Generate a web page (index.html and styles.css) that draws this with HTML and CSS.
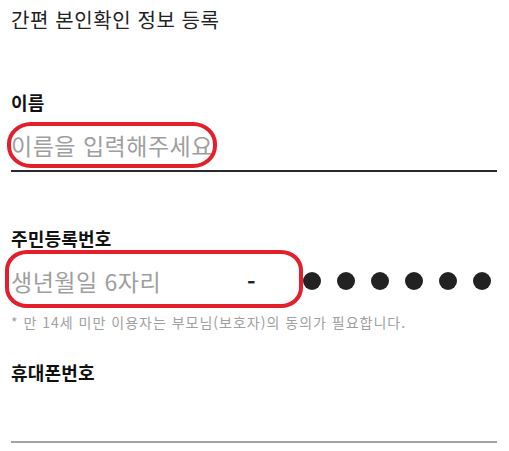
FILE: index.html
```html
<!DOCTYPE html>
<html lang="ko">
<head>
<meta charset="utf-8">
<title>간편 본인확인 정보 등록</title>
<link rel="stylesheet" href="styles.css">
</head>
<body>
<main class="page">
  <h1 class="title">간편 본인확인 정보 등록</h1>

  <section class="field field-name">
    <div class="label">이름</div>
    <div class="row row-underline">
      <span class="placeholder">이름을 입력해주세요</span>
      <span class="mark mark-name"></span>
    </div>
  </section>

  <section class="field field-rrn">
    <div class="label">주민등록번호</div>
    <div class="row">
      <span class="placeholder birth">생년월일 6자리</span>
      <span class="dash">-</span>
      <span class="dots">
        <i class="dot"></i><i class="dot"></i><i class="dot"></i><i class="dot"></i><i class="dot"></i><i class="dot"></i>
      </span>
      <span class="mark mark-rrn"></span>
    </div>
    <p class="note">* 만 14세 미만 이용자는 부모님(보호자)의 동의가 필요합니다.</p>
  </section>

  <section class="field field-phone">
    <div class="label">휴대폰번호</div>
    <div class="row row-underline row-gray"></div>
  </section>
</main>
</body>
</html>
```

FILE: styles.css
```css
html, body {
  margin: 0;
  padding: 0;
  background: #ffffff;
}

body {
  font-family: "Noto Sans CJK KR", "Noto Sans", sans-serif;
  color: #222222;
}

.page {
  width: 509px;
  height: 451px;
  box-sizing: border-box;
  padding: 6px 12px 0 11px;
  overflow: hidden;
}

.title {
  margin: 0;
  font-size: 20px;
  font-weight: 400;
  line-height: 28px;
  letter-spacing: 0.6px;
  color: #222222;
}

.field {
  display: flex;
  flex-direction: column;
}

.field-name {
  margin-top: 56px;
}

.field-rrn {
  margin-top: 54px;
}

.field-phone {
  margin-top: 28px;
}

.label {
  font-size: 18px;
  font-weight: 700;
  line-height: 24px;
  letter-spacing: 0.2px;
  color: #111111;
}

.row {
  position: relative;
  display: flex;
  align-items: center;
  height: 32px;
  margin-top: 15px;
}

.row-underline {
  height: auto;
  min-height: 32px;
  padding-bottom: 9px;
  border-bottom: 2px solid #2a2a2a;
}

.row-gray {
  padding-bottom: 10px;
  border-bottom-color: #a3a3a3;
}

.placeholder {
  font-size: 23px;
  line-height: 32px;
  letter-spacing: 0.5px;
  color: #9e9e9e;
}

.birth {
  width: 236px;
  flex: none;
}

.dash {
  font-size: 23px;
  font-weight: 700;
  line-height: 32px;
  color: #222222;
}

.dots {
  display: flex;
  gap: 16px;
  margin-left: auto;
  margin-right: 6px;
}

.dot {
  display: block;
  width: 18px;
  height: 18px;
  border-radius: 50%;
  background: #222222;
}

.note {
  margin: 15px 0 0;
  font-size: 14px;
  line-height: 20px;
  color: #a0a0a0;
  letter-spacing: 1px;
}

.mark {
  position: absolute;
  box-sizing: border-box;
  border: 4px solid #e41e2b;
  pointer-events: none;
}

.mark-name {
  left: -4px;
  top: -7px;
  width: 210px;
  height: 46px;
  border-radius: 24px / 22px;
}

.mark-rrn {
  left: -6px;
  top: -15px;
  width: 298px;
  height: 58px;
  border-radius: 22px / 20px;
}
```
